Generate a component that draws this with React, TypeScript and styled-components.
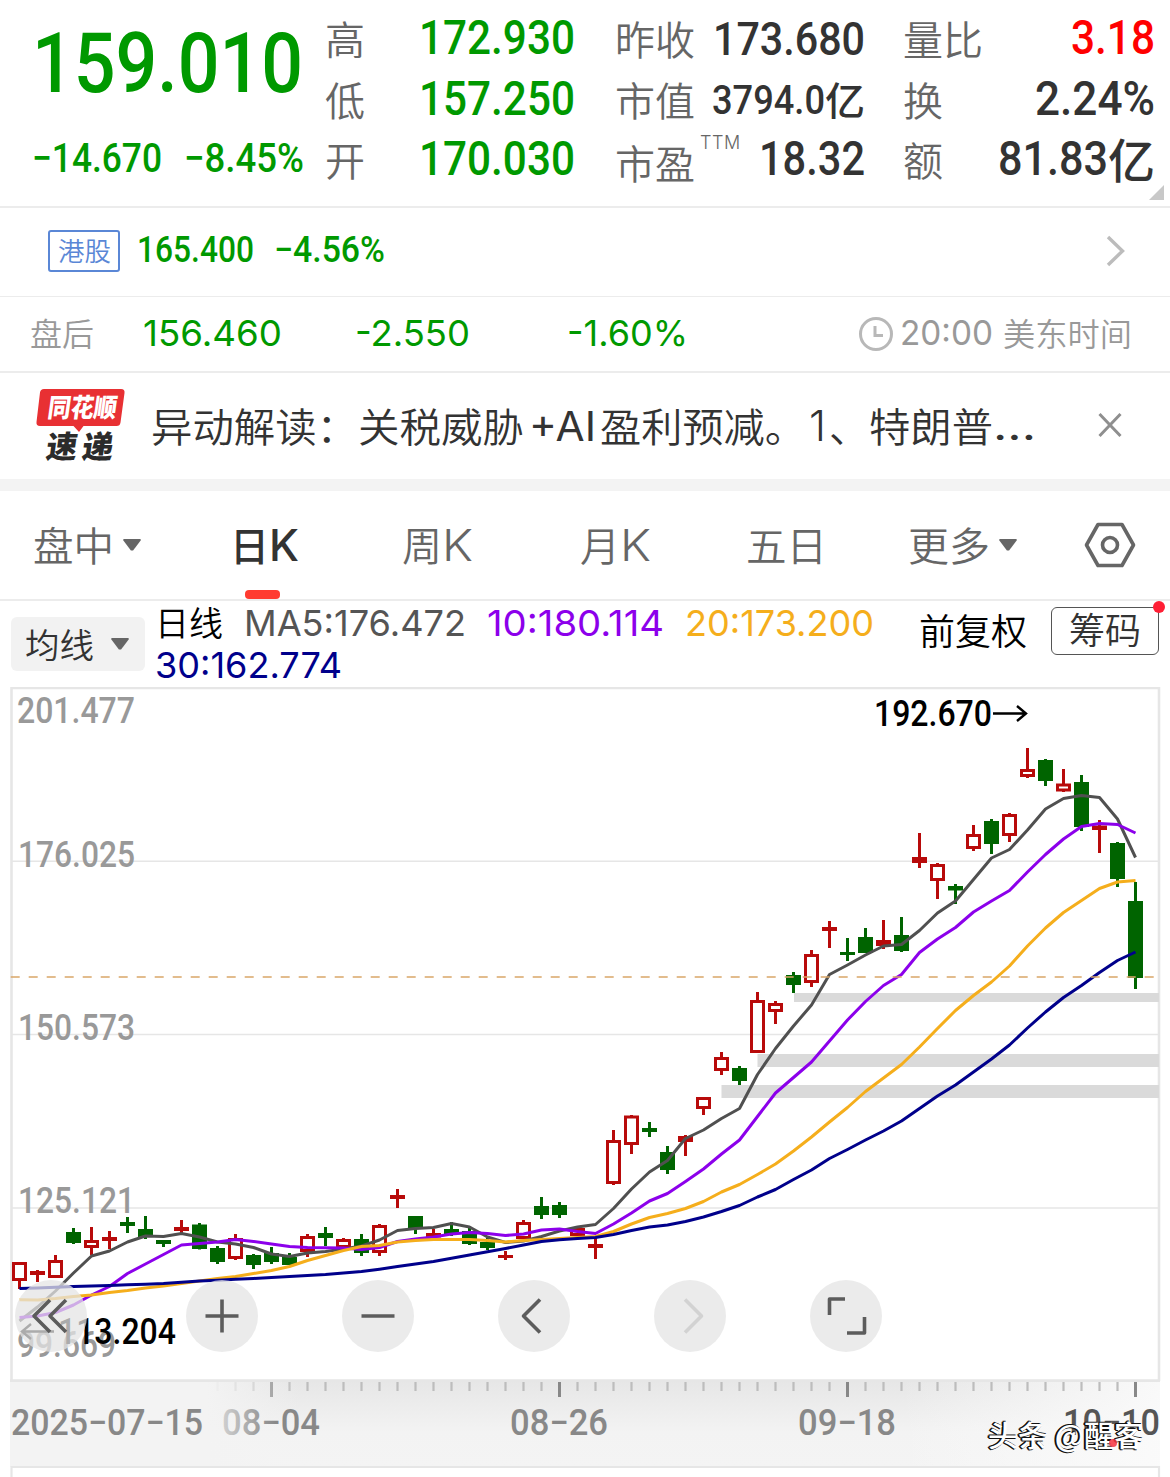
import React, { useLayoutEffect, useRef } from 'react';
import styled, { createGlobalStyle } from 'styled-components';

const DIN = "Roboto, 'Noto Sans CJK SC', sans-serif";
const UI = "Inter, 'Noto Sans CJK SC', sans-serif";
const CJK = "'Noto Sans CJK SC', sans-serif";

const GREEN = '#009900';
const DARK = '#333333';
const GREY = '#666666';

const Global = createGlobalStyle`
  * { box-sizing: border-box; }
  body { margin: 0; background: #fff; font-family: ${UI}; }
`;

/* ---------- text fitted to a fixed advance width ---------- */

const FitBox = styled.span<{ $w: number; $size: number; $color: string; $weight: number; $font: string; $lift: number }>`
  display: block;
  flex: none;
  width: ${p => p.$w}px;
  margin-top: ${p => -p.$lift}px;
  margin-bottom: ${p => p.$lift}px;
  font-family: ${p => p.$font};
  font-size: ${p => p.$size}px;
  font-weight: ${p => p.$weight};
  line-height: ${p => Math.round(p.$size * 1.2)}px;
  height: ${p => Math.round(p.$size * 1.2)}px;
  color: ${p => p.$color};
  white-space: nowrap;
`;

const FitInner = styled.span`
  display: inline-block;
  transform-origin: 0 50%;
`;

type FitProps = {
  w: number;
  size: number;
  color?: string;
  weight?: number;
  font?: string;
  lift?: number;
  children: React.ReactNode;
};

function Fit({ w, size, color = DARK, weight = 400, font = UI, lift = 0, children }: FitProps) {
  const ref = useRef<HTMLSpanElement>(null);
  useLayoutEffect(() => {
    const el = ref.current;
    if (!el) return;
    el.style.transform = 'none';
    const natural = el.getBoundingClientRect().width;
    if (natural > 0) el.style.transform = `scaleX(${w / natural})`;
  }, [w, children]);
  return (
    <FitBox $w={w} $size={size} $color={color} $weight={weight} $font={font} $lift={lift}>
      <FitInner ref={ref}>{children}</FitInner>
    </FitBox>
  );
}

const Page = styled.main`
  width: 1170px;
  height: 1477px;
  overflow: hidden;
  background: #fff;
`;

/* ---------- quote header ---------- */

const Header = styled.header`
  position: relative;
  display: grid;
  grid-template-columns: 325px 290px 288px 267px;
  height: 208px;
  border-bottom: 2px solid #ececec;
`;

const PriceColumn = styled.div`
  padding: 14px 0 0 32px;
`;

const ChangeRow = styled.div`
  display: flex;
  gap: 22px;
  margin-top: 21px;
`;

const StatColumn = styled.div<{ $right: number }>`
  display: grid;
  grid-auto-rows: 60.5px;
  padding: 8px ${p => p.$right}px 0 0;
`;

const Stat = styled.div`
  display: flex;
  align-items: center;
  justify-content: space-between;
`;

const Ratio = styled.div`
  display: flex;
  align-items: flex-start;
  padding-top: 6px;
  gap: 5px;
`;

const Sup = styled.sup`
  font: 300 18px/22px ${UI};
  letter-spacing: 0.5px;
  color: ${GREY};
  margin-top: -6px;
`;

const Amount = styled.div`
  display: flex;
  align-items: center;
`;

const Corner = styled.i`
  position: absolute;
  right: 6px;
  bottom: 6px;
  border-left: 15px solid transparent;
  border-bottom: 15px solid #c8c8c8;
`;

function Label({ w, children }: { w: number; children: string }) {
  return <Fit w={w} size={40} weight={350} color={GREY} font={CJK}>{children}</Fit>;
}

function Value({ w, color = DARK, size = 48, lift = 0, children }: { w: number; color?: string; size?: number; lift?: number; children: string }) {
  return <Fit w={w} size={size} weight={500} color={color} font={DIN} lift={lift}>{children}</Fit>;
}

/* ---------- info rows ---------- */

const Row = styled.section<{ $h: number; $line: number }>`
  display: flex;
  align-items: center;
  height: ${p => p.$h}px;
  border-bottom: ${p => p.$line}px solid #ececec;
`;

const MarketTag = styled.span`
  display: flex;
  align-items: center;
  justify-content: center;
  width: 72px;
  height: 42px;
  margin: -3px 17px 0 48px;
  padding-bottom: 2px;
  border: 2px solid #5a87d6;
  border-radius: 3px;
`;

const Spacer = styled.span<{ $w?: number }>`
  flex: ${p => (p.$w ? 'none' : 1)};
  width: ${p => (p.$w ? `${p.$w}px` : 'auto')};
`;

const Band = styled.div`
  height: 12px;
  background: #f3f3f3;
`;

const Headline = styled.div`
  display: flex;
  align-items: center;
  width: 890px;
  margin-left: 25px;
`;

const LogoSvg = styled.svg`
  overflow: visible;
  margin-top: -2px;
`;

function FlashLogo() {
  return (
    <LogoSvg width="90" height="76" viewBox="0 0 90 76">
      <path d="M8 2H85q4 0 3.500 4l-4 29.500q-.5 3.500-4 3.500H47.500l-4.500 6-5.500-6H4q-4 0-3.500-4L4 5.500q.5-3.500 4-3.500z" fill="#e83033" />
      <text x="15" y="30.500" transform="skewX(-8)" fontFamily={CJK} fontWeight="900" fontSize="26" textLength="69" lengthAdjust="spacingAndGlyphs" fill="#fff">同花顺</text>
      <text x="19" y="71" transform="skewX(-8)" fontFamily={CJK} fontWeight="900" fontSize="31" textLength="67" lengthAdjust="spacing" fill="#2b2b2b">速递</text>
    </LogoSvg>
  );
}

/* ---------- tabs ---------- */

const Tabs = styled.nav`
  position: relative;
  display: grid;
  grid-template-columns: 33px 197px 172px 178px 166px 162px 176px 86px;
  align-items: center;
  height: 110px;
  border-bottom: 2px solid #ececec;
`;

const Tab = styled.div<{ $active?: boolean }>`
  position: relative;
  display: flex;
  align-items: center;
  height: 108px;
  ${p => p.$active && `
    &::after {
      content: '';
      position: absolute;
      left: 15px;
      bottom: 0;
      width: 35px;
      height: 9px;
      border-radius: 4px;
      background: #ff3b30;
    }
  `}
`;

const Caret = styled.i<{ $gap: number }>`
  width: 18px;
  height: 12px;
  margin-left: ${p => p.$gap}px;
  background: ${GREY};
  clip-path: polygon(4% 0, 96% 0, 100% 9%, 56% 96%, 44% 96%, 0 9%);
`;

/* ---------- indicator legend ---------- */

const LegendRow = styled.section`
  display: flex;
  height: 86px;
  padding-left: 11px;
`;

const Picker = styled.div`
  display: flex;
  align-items: center;
  width: 134px;
  height: 54px;
  margin-top: 16px;
  padding-left: 14px;
  border-radius: 6px;
  background: #f2f2f2;
`;

const Averages = styled.div`
  width: 731px;
  margin: 1px 0 0 10px;
`;

const AverageLine = styled.div`
  display: flex;
  gap: 21px;
  height: 42px;
`;

const Adjust = styled.div`
  margin: 7px 24px 0 33px;
`;

const ChipButton = styled.div`
  position: relative;
  display: flex;
  justify-content: center;
  width: 108px;
  height: 48px;
  margin-top: 6px;
  border: 1.500px solid #555;
  border-radius: 6px;

  &::after {
    content: '';
    position: absolute;
    top: -7px;
    right: -7px;
    width: 12px;
    height: 12px;
    border-radius: 50%;
    background: #ff1f35;
  }
`;

/* ---------- chart ---------- */

const ChartArea = styled.section`
  position: relative;
  height: 790px;
`;

const ChartSvg = styled.svg`
  display: block;
`;

const Controls = styled.div`
  position: absolute;
  left: 15px;
  top: 593px;
  display: flex;
  gap: 84px;
`;

const RoundButton = styled.div<{ $first?: boolean }>`
  width: 72px;
  height: 72px;
  margin-right: ${p => (p.$first ? 15 : 0)}px;
  border-radius: 50%;
  background: rgba(228, 228, 228, 0.75);
`;

const Watermark = styled.div`
  position: absolute;
  left: 988px;
  top: 731px;
  text-shadow: -2px 0 0 #111, -1px -1px 0 #111, -1px 1px 0 #111;

  &::after {
    content: '';
    position: absolute;
    left: 121px;
    top: 21px;
    width: 8px;
    height: 8px;
    border-radius: 50%;
    background: #f5333f;
    opacity: 0.85;
  }
`;

// kind, high, body top, body bottom, low
type Candle = [string, number, number, number, number];
const candles: Candle[] = [
  ['r', 1262, 1262, 1281, 1289], ['r', 1270, 1271, 1275, 1282], ['r', 1255, 1260, 1278, 1278],
  ['g', 1228, 1232, 1243, 1244], ['r', 1227, 1240, 1248, 1255], ['r', 1231, 1237, 1241, 1249],
  ['g', 1217, 1222, 1226, 1233], ['g', 1216, 1229, 1237, 1239], ['g', 1240, 1240, 1244, 1247],
  ['r', 1220, 1227, 1231, 1233], ['g', 1223, 1224.5, 1249, 1249.5], ['g', 1246, 1248, 1262, 1264],
  ['r', 1234, 1238, 1259, 1260], ['g', 1254, 1255, 1265, 1269], ['g', 1247, 1253, 1262, 1264],
  ['g', 1253, 1257, 1265, 1265], ['r', 1234, 1236, 1252, 1257], ['g', 1227, 1233, 1238, 1246],
  ['r', 1238, 1239, 1248, 1248], ['g', 1234, 1239, 1253, 1256], ['r', 1224, 1225, 1253, 1256],
  ['r', 1189, 1195, 1199, 1208], ['g', 1216, 1216, 1229, 1234], ['r', 1229, 1233, 1237.5, 1237.5],
  ['g', 1222, 1229, 1234, 1236], ['g', 1227, 1231, 1244, 1245], ['g', 1238, 1242, 1248, 1250],
  ['r', 1251, 1255, 1258, 1260], ['r', 1220, 1222, 1239, 1239], ['g', 1197, 1206, 1215, 1219],
  ['g', 1202, 1205, 1215, 1218], ['r', 1228, 1228, 1236, 1236], ['r', 1236, 1244, 1248, 1259],
  ['r', 1130, 1140, 1184, 1185], ['r', 1115, 1115.5, 1145, 1154], ['g', 1122, 1128, 1132, 1137],
  ['g', 1146, 1152, 1170, 1174], ['r', 1135, 1136, 1142, 1156], ['r', 1097, 1097, 1109, 1115],
  ['r', 1052, 1057, 1071, 1075], ['g', 1066, 1068, 1081, 1085], ['r', 992, 1000, 1053, 1053],
  ['r', 1001, 1003, 1012, 1024], ['g', 972, 975, 985, 993], ['r', 950, 954, 983, 987],
  ['r', 921, 927, 931, 948], ['g', 938, 952, 955, 961], ['g', 928, 937, 953, 953],
  ['r', 920, 940, 946, 949], ['g', 917, 935, 951, 952], ['r', 833, 857, 863, 868],
  ['r', 863, 864, 881, 899], ['g', 884, 886, 890.5, 904], ['r', 825, 834, 849, 851],
  ['g', 819, 821, 844, 854], ['r', 813, 814, 836, 842], ['r', 748, 769, 777, 778],
  ['g', 759, 760, 781, 786], ['r', 769, 783.5, 791.5, 792], ['g', 775, 782, 827, 831],
  ['r', 820, 825.5, 830, 853], ['g', 842, 843, 879, 887], ['g', 882, 901, 978, 989],
];

const ma5 = [1321, 1307, 1291, 1273, 1256, 1251, 1242, 1236, 1236.5, 1233.5, 1237, 1242, 1244, 1247.5, 1254, 1256.5, 1253, 1251.5, 1249, 1246, 1240, 1230.5, 1228.5, 1227.5, 1223.5, 1227, 1237, 1242.5, 1241, 1236.5, 1231, 1227, 1224.5, 1208.5, 1189, 1172, 1160.5, 1138.5, 1130, 1118.5, 1108.5, 1074.5, 1048.5, 1026, 1005, 974.5, 965, 955, 946, 944.5, 930.5, 913, 901, 879.5, 858, 849.5, 830, 809, 798.5, 795.5, 797.5, 819, 857.5];
const ma10 = [1317.5, 1316, 1312.5, 1305, 1295, 1286.5, 1273.5, 1264, 1254.5, 1245, 1243.5, 1242, 1239.5, 1241.5, 1244, 1246.5, 1247.5, 1247.8, 1248, 1249.5, 1247.5, 1241.5, 1239, 1237, 1234, 1232.5, 1233.5, 1235.5, 1234, 1230, 1229, 1231.5, 1233.5, 1224, 1213, 1201, 1193.5, 1181.5, 1169, 1154, 1140, 1116.5, 1093, 1077.5, 1062, 1041, 1020, 1001.5, 985.5, 974.5, 952.5, 939, 927.5, 912, 901, 890.5, 872, 854.5, 839, 826.5, 823.5, 824.5, 833];
const ma20 = [1299.7, 1300, 1298.5, 1296.5, 1295, 1292.5, 1290.5, 1288, 1286, 1283.5, 1281, 1278.5, 1276.5, 1273.5, 1270.5, 1266.5, 1260.5, 1255.5, 1250.5, 1246.5, 1245.5, 1242, 1240.5, 1239.5, 1239.5, 1239.5, 1240.5, 1242, 1240.5, 1239.5, 1238.5, 1237.5, 1236.5, 1231.5, 1224, 1217.5, 1213.5, 1208.5, 1201.5, 1192, 1184.5, 1174.5, 1164, 1151, 1137, 1122, 1107.5, 1091.5, 1078, 1064.5, 1047, 1028.5, 1010.5, 995.5, 982, 966, 946, 928, 912.5, 900.5, 888.5, 882, 880.5];
const ma30 = [1288.5, 1288, 1287.3, 1286.6, 1286, 1285.4, 1284.8, 1284.2, 1283.5, 1282.3, 1281, 1280.2, 1279.3, 1278.5, 1277.5, 1276.5, 1275.5, 1274.5, 1273, 1271.5, 1269.2, 1266.5, 1264, 1261.5, 1258.2, 1255, 1251.7, 1248.5, 1245, 1241.5, 1239.7, 1238.5, 1237.5, 1234.5, 1230.5, 1227, 1225, 1221.5, 1217, 1211.5, 1205.5, 1197, 1189.5, 1179.5, 1170, 1158.5, 1149.5, 1140, 1131, 1121, 1108.5, 1096, 1085, 1072, 1059, 1045, 1028, 1012, 997.5, 985.5, 972.5, 960.5, 952];

const xAt = (i: number) => 19.5 + 18 * i;
const toPoints = (ys: number[]) => ys.map((y, i) => `${xAt(i)},${y}`).join(' ');

const levels: [string, number, number, number][] = [
  ['201.477', 17, 723, 118], ['176.025', 18, 866.5, 117], ['150.573', 18, 1040, 117],
  ['125.121', 18, 1213, 117], ['99.669', 17, 1357, 99],
];
const dates: [string, number, number, string][] = [
  ['2025−07−15', 11, 192, '#888'], ['08−04', 222, 98, 'url(#dateFade)'],
  ['08−26', 510, 98, '#888'], ['09−18', 798, 98, '#888'], ['10−10', 1063, 97, '#555'],
];
const gaps: [number, number, number][] = [[794, 993, 9], [757.5, 1054, 13], [721.5, 1085, 13]];

function CandleMark({ c, i }: { c: Candle; i: number }) {
  const [kind, high, top, bottom, low] = c;
  const x = xAt(i);
  const color = kind === 'r' ? '#b80a0a' : '#006400';
  const hollow = kind === 'r' && bottom - top > 5;
  return (
    <g stroke={color} strokeWidth="3">
      {high < top && <line x1={x} x2={x} y1={high} y2={top + 0.5} />}
      {low > bottom && <line x1={x} x2={x} y1={bottom - 0.5} y2={low} />}
      {hollow
        ? <rect x={x - 6} y={top + 1.5} width={12} height={bottom - top - 3} fill="none" />
        : <rect x={x - 7.5} y={top} width={15} height={bottom - top} fill={color} stroke="none" />}
    </g>
  );
}

function Chart() {
  return (
    <ChartSvg width="1170" height="790" viewBox="0 687 1170 790">
      <defs>
        <linearGradient id="axisShade" x1="0" y1="0" x2="0" y2="1">
          <stop offset="0" stopColor="#e6e6e6" />
          <stop offset=".6" stopColor="#f3f3f3" />
          <stop offset="1" stopColor="#f4f4f4" />
        </linearGradient>
        <linearGradient id="leftFade" x1="0" x2="1">
          <stop offset="0" stopColor="#f3f3f3" />
          <stop offset=".68" stopColor="#f3f3f3" />
          <stop offset="1" stopColor="#f3f3f3" stopOpacity="0" />
        </linearGradient>
        <linearGradient id="rightFade" x1="0" x2="1">
          <stop offset="0" stopColor="#fbfbfb" stopOpacity="0" />
          <stop offset="1" stopColor="#fbfbfb" stopOpacity=".9" />
        </linearGradient>
        <linearGradient id="dateFade" x1="0" x2="1">
          <stop offset="0" stopColor="#d0d0d0" />
          <stop offset=".4" stopColor="#999" />
          <stop offset=".55" stopColor="#888" />
        </linearGradient>
      </defs>

      <rect x="10" y="1380" width="1150" height="87" fill="url(#axisShade)" />
      <rect x="900" y="1382" width="260" height="84" fill="url(#rightFade)" />
      {candles.map((_, i) => {
        if (i < 11) return null;
        const major = (i - 14) % 16 === 0;
        return <line key={i} x1={xAt(i)} x2={xAt(i)} y1="1382" y2={major ? 1397 : 1391} stroke={major ? '#888' : '#bdbdbd'} strokeWidth={major ? 3 : 2.2} />;
      })}
      <rect x="10" y="1382" width="290" height="84" fill="url(#leftFade)" />

      <g stroke="#e6e6e6">
        <path d="M12 861.3H1158M12 1034.600H1158M12 1208H1158" strokeWidth="1.500" />
        <path d="M11.500 1381V688H1159V1381M10 1380.500H1160" fill="none" strokeWidth="2.600" />
        <path d="M11.500 1477V1467H1159V1477" fill="none" strokeWidth="2.200" />
      </g>

      {gaps.map(([x, y, h]) => <rect key={y} x={x} y={y} width={1159 - x} height={h} fill="#dadada" />)}

      <g fontFamily={DIN} fontSize="36" fontWeight="500">
        {levels.map(([t, x, y, w]) => (
          <text key={t} x={x} y={y} textLength={w} lengthAdjust="spacingAndGlyphs" fill="#999">{t}</text>
        ))}
        {dates.map(([t, x, w, fill]) => (
          <text key={t} x={x} y="1434.500" textLength={w} lengthAdjust="spacingAndGlyphs" fill={fill}>{t}</text>
        ))}
      </g>

      {candles.map((c, i) => <CandleMark key={i} c={c} i={i} />)}

      <g fill="none" strokeWidth="3" strokeLinejoin="round">
        <polyline points={toPoints(ma5)} stroke="#505050" />
        <polyline points={toPoints(ma10)} stroke="#8c00eb" />
        <polyline points={toPoints(ma20)} stroke="#f5ae1c" />
        <polyline points={toPoints(ma30)} stroke="#00008b" />
      </g>
      <line x1="10.700" x2="1158" y1="977" y2="977" stroke="#d9a668" strokeWidth="1.600" strokeDasharray="9 9" />

      <g fontFamily={DIN} fontSize="36" fontWeight="500" fill="#000">
        <text x="874" y="726" textLength="118" lengthAdjust="spacingAndGlyphs">192.670</text>
        <text x="58" y="1344" textLength="118" lengthAdjust="spacingAndGlyphs">113.204</text>
      </g>
      <g fill="none" stroke="#000" strokeWidth="2.400">
        <path d="M993 713.500H1026M1017 706l9 7.500-9 7.500" />
        <path d="M54 1331.500H22M31 1324l-9 7.500 9 7.500" />
      </g>
    </ChartSvg>
  );
}

const glyphs = [
  'M35 20L19 36l16 16M51 20L35 36l16 16',
  'M19.500 36h33M36 19.500v33',
  'M19.500 36h33',
  'M42 19.500L25.500 36 42 52.500',
  'M31 19.500L47.500 36 31 52.500',
  'M35 19H19.500V35M54.500 37V53H37',
];

function ChartControls() {
  return (
    <Controls>
      {glyphs.map((d, i) => (
        <RoundButton key={i} $first={i === 0}>
          <svg width="72" height="72" viewBox="0 0 72 72" fill="none" stroke={i === 4 ? '#d2d2d2' : '#5c5c5c'} strokeWidth="3.600" strokeLinejoin="round">
            <path d={d} />
          </svg>
        </RoundButton>
      ))}
    </Controls>
  );
}

export default function App() {
  return (
    <Page>
      <Global />
      <Header>
        <PriceColumn>
          <Fit w={271} size={83} weight={500} color={GREEN} font={DIN}>159.010</Fit>
          <ChangeRow>
            <Value w={130} size={40} color={GREEN}>−14.670</Value>
            <Value w={120} size={40} color={GREEN}>−8.45%</Value>
          </ChangeRow>
        </PriceColumn>
        <StatColumn $right={40}>
          <Stat><Label w={40}>高</Label><Value w={156} color={GREEN}>172.930</Value></Stat>
          <Stat><Label w={40}>低</Label><Value w={156} color={GREEN}>157.250</Value></Stat>
          <Stat><Label w={40}>开</Label><Value w={156} color={GREEN}>170.030</Value></Stat>
        </StatColumn>
        <StatColumn $right={38}>
          <Stat><Label w={80}>昨收</Label><Value w={152} size={46.500} lift={-1}>173.680</Value></Stat>
          <Stat>
            <Label w={80}>市值</Label>
            <Amount>
              <Value w={113} size={40} lift={-2}>3794.0</Value>
              <Fit w={40} size={39} weight={500} font={CJK}>亿</Fit>
            </Amount>
          </Stat>
          <Stat><Ratio><Label w={80}>市盈</Label><Sup>TTM</Sup></Ratio><Value w={106}>18.32</Value></Stat>
        </StatColumn>
        <StatColumn $right={15}>
          <Stat><Label w={80}>量比</Label><Value w={84} color="#ff0000">3.18</Value></Stat>
          <Stat><Label w={40}>换</Label><Value w={120}>2.24%</Value></Stat>
          <Stat>
            <Label w={40}>额</Label>
            <Amount>
              <Value w={110}>81.83</Value>
              <Fit w={47} size={47} weight={500} font={CJK} lift={1}>亿</Fit>
            </Amount>
          </Stat>
        </StatColumn>
        <Corner />
      </Header>

      <Row $h={89} $line={1}>
        <MarketTag><Fit w={53} size={26} weight={350} color="#5a87d6" font={CJK}>港股</Fit></MarketTag>
        <Value w={117} size={36} color={GREEN} lift={2}>165.400</Value>
        <Spacer $w={20} />
        <Value w={111} size={36} color={GREEN} lift={2}>−4.56%</Value>
        <Spacer />
        <svg width="20" height="34" viewBox="0 0 20 34" fill="none" stroke="#bcbcbc" strokeWidth="3.400">
          <path d="M2 2l14.500 14L2 30" />
        </svg>
        <Spacer $w={44} />
      </Row>

      <Row $h={76} $line={2}>
        <Spacer $w={30} />
        <Fit w={64} size={32} weight={350} color="#999" font={CJK} lift={2}>盘后</Fit>
        <Spacer $w={49} />
        <Fit w={139} size={36} color={GREEN} lift={1}>156.460</Fit>
        <Spacer $w={73} />
        <Fit w={115} size={36} color={GREEN} lift={1}>-2.550</Fit>
        <Spacer $w={97} />
        <Fit w={121} size={36} color={GREEN} lift={1}>-1.60%</Fit>
        <Spacer />
        <svg width="36" height="36" viewBox="0 0 36 36" fill="none" stroke="#b8b8b8" strokeWidth="3">
          <circle cx="18" cy="18" r="15.500" />
          <path d="M17 10v9.500h8" />
        </svg>
        <Spacer $w={6} />
        <Fit w={93} size={33.500} color="#999" lift={1}>20:00</Fit>
        <Spacer $w={10} />
        <Fit w={129} size={32} weight={350} color="#999" font={CJK} lift={2}>美东时间</Fit>
        <Spacer $w={38} />
      </Row>

      <Row $h={106} $line={0}>
        <Spacer $w={36} />
        <FlashLogo />
        <Headline>
          <Fit w={207} size={40} weight={350} font={CJK} lift={1}>异动解读：</Fit>
          <Fit w={166} size={40} weight={350} font={CJK} lift={1}>关税威胁</Fit>
          <Spacer $w={5} />
          <Fit w={67} size={41}>+AI</Fit>
          <Spacer $w={4} />
          <Fit w={206} size={40} weight={350} font={CJK} lift={1}>盈利预减。</Fit>
          <Spacer $w={3} />
          <Fit w={17} size={42} weight={350}>1</Fit>
          <Spacer $w={3} />
          <Fit w={40} size={40} weight={350} font={CJK} lift={1}>、</Fit>
          <Fit w={124} size={40} weight={350} font={CJK} lift={1}>特朗普</Fit>
          <Fit w={43} size={40}>...</Fit>
        </Headline>
        <Spacer />
        <svg width="26" height="28" viewBox="0 0 26 28" stroke="#8f8f8f" strokeWidth="3">
          <path d="M2.500 2l21 22M23.500 2L2.500 24" />
        </svg>
        <Spacer $w={47} />
      </Row>
      <Band />

      <Tabs>
        <span />
        <Tab><Fit w={81} size={40} weight={350} color={GREY} font={CJK} lift={1}>盘中</Fit><Caret $gap={9} /></Tab>
        <Tab $active>
          <Fit w={39} size={40} weight={500} font={CJK} lift={1}>日</Fit>
          <Fit w={30} size={44} weight={500}>K</Fit>
        </Tab>
        <Tab>
          <Fit w={40} size={40} weight={350} color={GREY} font={CJK} lift={1}>周</Fit>
          <Fit w={31} size={44} weight={350} color={GREY}>K</Fit>
        </Tab>
        <Tab>
          <Fit w={40} size={40} weight={350} color={GREY} font={CJK} lift={1}>月</Fit>
          <Fit w={31} size={44} weight={350} color={GREY}>K</Fit>
        </Tab>
        <Tab><Fit w={81} size={40} weight={350} color={GREY} font={CJK} lift={1}>五日</Fit></Tab>
        <Tab><Fit w={82} size={40} weight={350} color={GREY} font={CJK} lift={1}>更多</Fit><Caret $gap={9} /></Tab>
        <svg width="52" height="48" viewBox="0 0 52 48" fill="none" stroke={GREY} strokeWidth="3.600" strokeLinejoin="round">
          <path d="M14 3.500H38L49.500 24 38 44.500H14L2.500 24z" />
          <circle cx="26" cy="24" r="7.500" />
        </svg>
      </Tabs>

      <LegendRow>
        <Picker>
          <Fit w={69} size={34} weight={350} font={CJK} lift={1}>均线</Fit>
          <Caret $gap={17} />
        </Picker>
        <Averages>
          <AverageLine>
            <Fit w={68} size={34} weight={350} color="#000" font={CJK} lift={1}>日线</Fit>
            <Fit w={222} size={36} color="#555">MA5:176.472</Fit>
            <Fit w={177} size={36} color="#8c00eb">10:180.114</Fit>
            <Fit w={189} size={36} color="#f5ae1c">20:173.200</Fit>
          </AverageLine>
          <AverageLine><Fit w={187} size={36} color="#00008b">30:162.774</Fit></AverageLine>
        </Averages>
        <Adjust><Fit w={108} size={36} weight={350} color="#000" font={CJK}>前复权</Fit></Adjust>
        <ChipButton><Fit w={72} size={36} weight={350} font={CJK} lift={1}>筹码</Fit></ChipButton>
      </LegendRow>

      <ChartArea>
        <Chart />
        <ChartControls />
        <Watermark><Fit w={156} size={29} weight={500} color="#fff" font={CJK} lift={1}>头条 @醒客</Fit></Watermark>
      </ChartArea>
    </Page>
  );
}
